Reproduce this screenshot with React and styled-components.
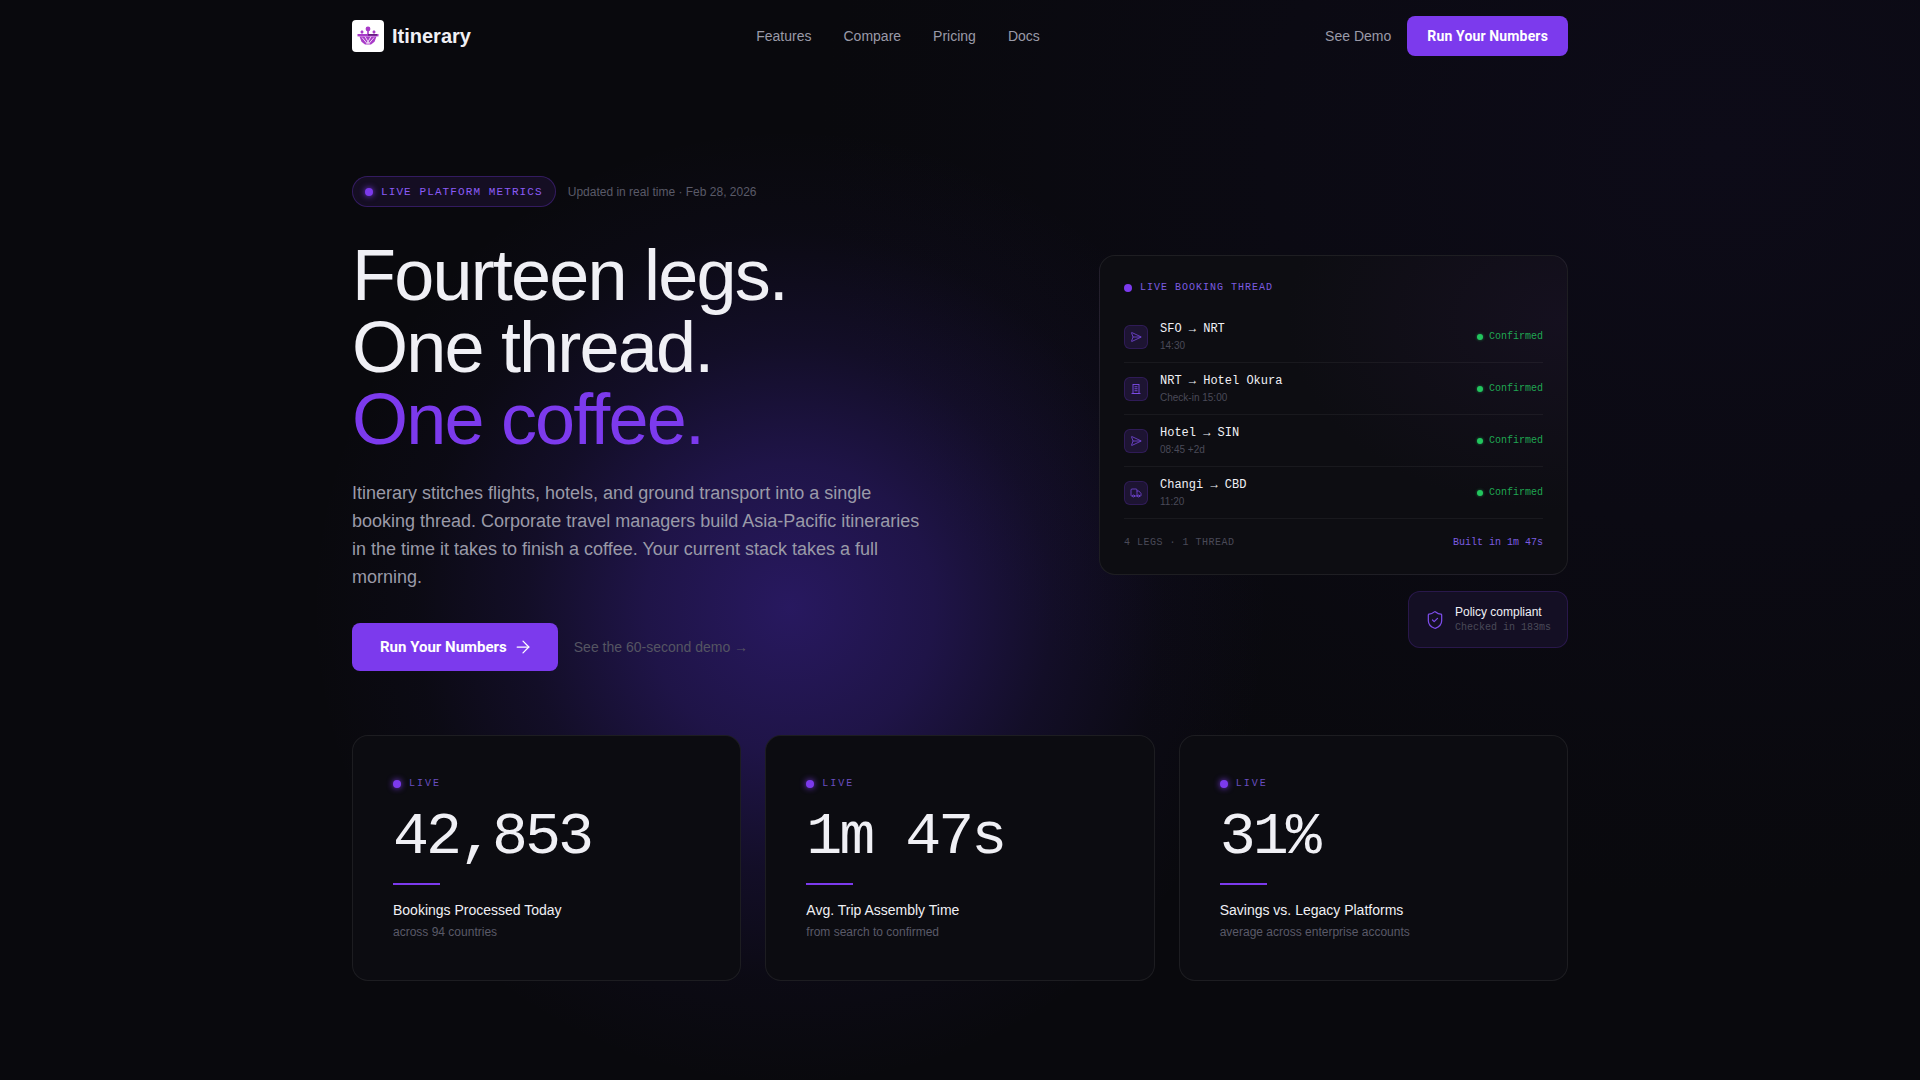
import React from "react";
import styled, { createGlobalStyle } from "styled-components";
import { ArrowRight, SendHorizontal, ShieldCheck, Truck } from "lucide-react";

const GlobalStyle = createGlobalStyle`
    * { box-sizing: border-box; }
    html, body { margin: 0; padding: 0; background: #09090d; }
    body { font-family: "Liberation Sans", Arial, sans-serif; color: #f0f0f5; }
`;

const MONO = `"Liberation Mono", "Courier New", monospace`;

const HotelIcon = ({ size }) => (
    <svg width={size} height={size} viewBox="0 0 24 24" fill="none" stroke="currentColor" strokeWidth="1.8">
        <rect x="6" y="3" width="12" height="18" />
        <path d="M3 21h18M9 7.5h6M9 11.5h6M9 15.5h6" />
    </svg>
);

const legs = [
    { route: "SFO → NRT", time: "14:30", icon: SendHorizontal },
    { route: "NRT → Hotel Okura", time: "Check-in 15:00", icon: HotelIcon },
    { route: "Hotel → SIN", time: "08:45 +2d", icon: SendHorizontal },
    { route: "Changi → CBD", time: "11:20", icon: Truck },
];

const stats = [
    { value: "42,853", label: "Bookings Processed Today", sub: "across 94 countries" },
    { value: "1m 47s", label: "Avg. Trip Assembly Time", sub: "from search to confirmed" },
    { value: "31%", label: "Savings vs. Legacy Platforms", sub: "average across enterprise accounts" },
];

const Logo = () => (
    <svg width="26" height="26" viewBox="0 0 26 26" fill="#a83ac8">
        <circle cx="13" cy="6" r="2.4" />
        <rect x="12.2" y="4" width="1.6" height="7" />
        <path d="M7 7l1.8 2-1.8 2-1.8-2zM19 7l1.8 2-1.8 2-1.8-2z" />
        <rect x="2.5" y="11" width="21" height="2.4" />
        <path d="M4.5 13.4h17l-2 5.4-3.5 2.7h-6l-3.5-2.7z" />
        <path d="M7 14.5l5.5 6.5M19 14.5l-5.5 6.5M10 13.5l4 7M16 13.5l-4 7" stroke="#fff" strokeWidth="0.8" />
        <rect x="13" y="11.4" width="9" height="1" fill="#3a1050" />
    </svg>
);

const App = () => {
    return (
        <Page>
            <GlobalStyle />
            <Glow />
            <Wrap>
                <Nav>
                    <Brand>
                        <LogoBox><Logo /></LogoBox>
                        <BrandName>Itinerary</BrandName>
                    </Brand>
                    <NavLinks>
                        <NavLink>Features</NavLink>
                        <NavLink>Compare</NavLink>
                        <NavLink>Pricing</NavLink>
                        <NavLink>Docs</NavLink>
                    </NavLinks>
                    <NavActions>
                        <NavLink>See Demo</NavLink>
                        <NavButton>Run Your Numbers</NavButton>
                    </NavActions>
                </Nav>

                <Hero>
                    <HeroLeft>
                        <PillRow>
                            <Pill><Dot />LIVE PLATFORM METRICS</Pill>
                            <Updated>Updated in real time · Feb 28, 2026</Updated>
                        </PillRow>
                        <Title>
                            Fourteen legs.<br />
                            One thread.<br />
                            <Accent>One coffee.</Accent>
                        </Title>
                        <Lead>
                            Itinerary stitches flights, hotels, and ground transport into a single
                            booking thread. Corporate travel managers build Asia-Pacific itineraries
                            in the time it takes to finish a coffee. Your current stack takes a full
                            morning.
                        </Lead>
                        <Actions>
                            <CtaButton>Run Your Numbers <ArrowRight size={20} strokeWidth={1.5} /></CtaButton>
                            <DemoLink>See the 60-second demo →</DemoLink>
                        </Actions>
                    </HeroLeft>

                    <HeroRight>
                        <ThreadCard>
                            <ThreadHead><SmallDot />LIVE BOOKING THREAD</ThreadHead>
                            {legs.map((leg) => (
                                <LegRow key={leg.route}>
                                    <LegIcon><leg.icon size={12} strokeWidth={1.5} /></LegIcon>
                                    <LegText>
                                        <LegRoute>{leg.route}</LegRoute>
                                        <LegTime>{leg.time}</LegTime>
                                    </LegText>
                                    <LegStatus><GreenDot />Confirmed</LegStatus>
                                </LegRow>
                            ))}
                            <ThreadFoot>
                                <FootLeft>4 LEGS · 1 THREAD</FootLeft>
                                <FootRight>Built in 1m 47s</FootRight>
                            </ThreadFoot>
                        </ThreadCard>
                        <PolicyCard>
                            <ShieldCheck size={20} strokeWidth={1.5} color="#7c4ce8" />
                            <div>
                                <PolicyTitle>Policy compliant</PolicyTitle>
                                <PolicySub>Checked in 183ms</PolicySub>
                            </div>
                        </PolicyCard>
                    </HeroRight>
                </Hero>

                <Stats>
                    {stats.map((stat) => (
                        <StatCard key={stat.value}>
                            <StatLive><Dot />LIVE</StatLive>
                            <StatValue>{stat.value}</StatValue>
                            <StatRule />
                            <StatLabel>{stat.label}</StatLabel>
                            <StatSub>{stat.sub}</StatSub>
                        </StatCard>
                    ))}
                </Stats>
            </Wrap>
        </Page>
    );
};

export default App;

const Page = styled.div`
    position: relative;
    min-height: 1080px;
    overflow: hidden;
    background: radial-gradient(ellipse 900px 750px at 1720px 150px, #0d0b18 0%, #0b0a13 50%, #09090d 100%);
`;

const Glow = styled.div`
    position: absolute;
    left: 310px;
    top: 127px;
    width: 960px;
    height: 960px;
    background: radial-gradient(ellipse 50% 50% at 50% 50%, rgba(90, 50, 230, 0.38) 0%, rgba(90, 50, 230, 0.27) 30%, rgba(90, 50, 230, 0.12) 55%, rgba(90, 50, 230, 0.03) 78%, transparent 100%);
    pointer-events: none;
`;

const Wrap = styled.div`
    position: relative;
    width: 1216px;
    margin: 0 auto;
`;

const Nav = styled.nav`
    height: 72px;
    display: flex;
    align-items: center;
    justify-content: space-between;
`;

const Brand = styled.div`
    display: flex;
    align-items: center;
    gap: 8px;
`;

const LogoBox = styled.div`
    width: 32px;
    height: 32px;
    border-radius: 4px;
    background: #fff;
    display: flex;
    align-items: center;
    justify-content: center;
`;

const BrandName = styled.span`
    font-size: 20px;
    font-weight: 700;
`;

const NavLinks = styled.div`
    display: flex;
    gap: 32px;
`;

const NavLink = styled.a`
    font-size: 14px;
    color: #9a9aa8;
`;

const NavActions = styled.div`
    display: flex;
    align-items: center;
    gap: 16px;
`;

const NavButton = styled.button`
    height: 40px;
    padding: 0 20px;
    border: none;
    border-radius: 8px;
    background: #7c3aed;
    color: #fff;
    font-family: Roboto, sans-serif;
    font-size: 14px;
    font-weight: 700;
    letter-spacing: 0.15px;
`;

const Hero = styled.section`
    display: flex;
    justify-content: space-between;
    align-items: flex-start;
    padding-top: 104px;
`;

const HeroLeft = styled.div`
    width: 580px;
`;

const PillRow = styled.div`
    display: flex;
    align-items: center;
    gap: 12px;
`;

const Pill = styled.div`
    height: 31px;
    padding: 0 12px;
    display: flex;
    align-items: center;
    gap: 8px;
    border: 1px solid rgba(124, 58, 237, 0.3);
    border-radius: 16px;
    background: rgba(124, 58, 237, 0.1);
    color: #8b5cf6;
    font-family: ${MONO};
    font-size: 11px;
    letter-spacing: 1.1px;
`;

const Dot = styled.span`
    width: 8px;
    height: 8px;
    border-radius: 50%;
    background: #7c3aed;
    box-shadow: 0 0 6px #7c3aed;
`;

const Updated = styled.span`
    font-size: 12px;
    color: #5a5a68;
`;

const Title = styled.h1`
    margin: 32px 0 0;
    font-size: 72px;
    line-height: 72px;
    font-weight: 400;
    letter-spacing: -1.8px;
    color: #f0f0f5;
`;

const Accent = styled.span`
    color: #7c3aed;
`;

const Lead = styled.p`
    margin: 24px 0 0;
    font-size: 18px;
    line-height: 28px;
    color: #9a9aa8;
`;

const Actions = styled.div`
    margin-top: 32px;
    display: flex;
    align-items: center;
    gap: 16px;
`;

const CtaButton = styled.button`
    height: 48px;
    padding: 0 25px 0 28px;
    display: flex;
    align-items: center;
    gap: 6px;
    border: none;
    border-radius: 8px;
    background: #7c3aed;
    color: #fff;
    font-family: Roboto, sans-serif;
    font-size: 15px;
    font-weight: 700;
`;

const DemoLink = styled.a`
    font-size: 14px;
    color: #555562;
`;

const HeroRight = styled.div`
    width: 469px;
    margin-top: 79px;
    display: flex;
    flex-direction: column;
    align-items: flex-end;
    gap: 16px;
`;

const ThreadCard = styled.div`
    width: 100%;
    padding: 25px 24px;
    border: 1px solid rgba(255, 255, 255, 0.07);
    border-radius: 16px;
    background: radial-gradient(ellipse 60% 60% at 100% 20%, #15101f 0%, #0d0d12 100%);
`;

const ThreadHead = styled.div`
    display: flex;
    align-items: center;
    gap: 8px;
    margin-bottom: 17px;
    font-family: ${MONO};
    font-size: 10px;
    line-height: 13px;
    letter-spacing: 1px;
    color: #7c5ce0;
`;

const SmallDot = styled.span`
    width: 8px;
    height: 8px;
    border-radius: 50%;
    background: #7c3aed;
`;

const LegRow = styled.div`
    height: 52px;
    display: flex;
    align-items: center;
    gap: 12px;
    border-bottom: 1px solid rgba(255, 255, 255, 0.05);
`;

const LegIcon = styled.div`
    width: 24px;
    height: 24px;
    border-radius: 6px;
    display: flex;
    align-items: center;
    justify-content: center;
    border: 1px solid rgba(124, 58, 237, 0.2);
    background: rgba(124, 58, 237, 0.15);
    color: #7c4ce8;
`;

const LegText = styled.div`
    flex: 1;
`;

const LegRoute = styled.div`
    font-family: ${MONO};
    font-size: 12px;
    line-height: 18px;
    color: #f0f0f5;
`;

const LegTime = styled.div`
    font-size: 10px;
    line-height: 15px;
    color: #4a4a58;
`;

const LegStatus = styled.div`
    display: flex;
    align-items: center;
    gap: 6px;
    font-family: ${MONO};
    font-size: 10px;
    color: rgba(34, 197, 94, 0.85);
`;

const GreenDot = styled.span`
    width: 6px;
    height: 6px;
    border-radius: 50%;
    background: #22c55e;
    box-shadow: 0 0 3px rgba(34, 197, 94, 0.6);
`;

const ThreadFoot = styled.div`
    margin-top: 17px;
    display: flex;
    justify-content: space-between;
    font-family: ${MONO};
    font-size: 10px;
    line-height: 13px;
`;

const FootLeft = styled.span`
    letter-spacing: 0.5px;
    color: #4a4a58;
`;

const FootRight = styled.span`
    color: #7c5ce0;
`;

const PolicyCard = styled.div`
    width: 160px;
    height: 57px;
    padding: 0 16px;
    display: flex;
    align-items: center;
    gap: 10px;
    border: 1px solid rgba(124, 58, 237, 0.2);
    border-radius: 12px;
    background: #140f24;
`;

const PolicyTitle = styled.div`
    font-size: 12px;
    line-height: 16px;
    color: #f0f0f5;
`;

const PolicySub = styled.div`
    margin-top: 1px;
    font-family: ${MONO};
    font-size: 10px;
    line-height: 14px;
    color: #4a4a58;
`;

const Stats = styled.section`
    margin-top: 64px;
    display: grid;
    grid-template-columns: repeat(3, 1fr);
    gap: 24px;
`;

const StatCard = styled.div`
    height: 246px;
    padding: 40px;
    border: 1px solid rgba(255, 255, 255, 0.07);
    border-radius: 16px;
    background: #0c0c11;
`;

const StatLive = styled.div`
    display: flex;
    align-items: center;
    gap: 8px;
    font-family: ${MONO};
    font-size: 10px;
    line-height: 15px;
    letter-spacing: 2px;
    color: #6a4fc0;
`;

const StatValue = styled.div`
    margin-top: 14px;
    font-family: ${MONO};
    font-size: 60px;
    line-height: 64px;
    letter-spacing: -3px;
    color: #f0f0f5;
`;

const StatRule = styled.div`
    width: 47px;
    height: 2px;
    margin-top: 14px;
    background: #7c3aed;
`;

const StatLabel = styled.div`
    margin-top: 17px;
    font-size: 14px;
    color: #f0f0f5;
`;

const StatSub = styled.div`
    margin-top: 7px;
    font-size: 12px;
    color: #5a5a68;
`;
